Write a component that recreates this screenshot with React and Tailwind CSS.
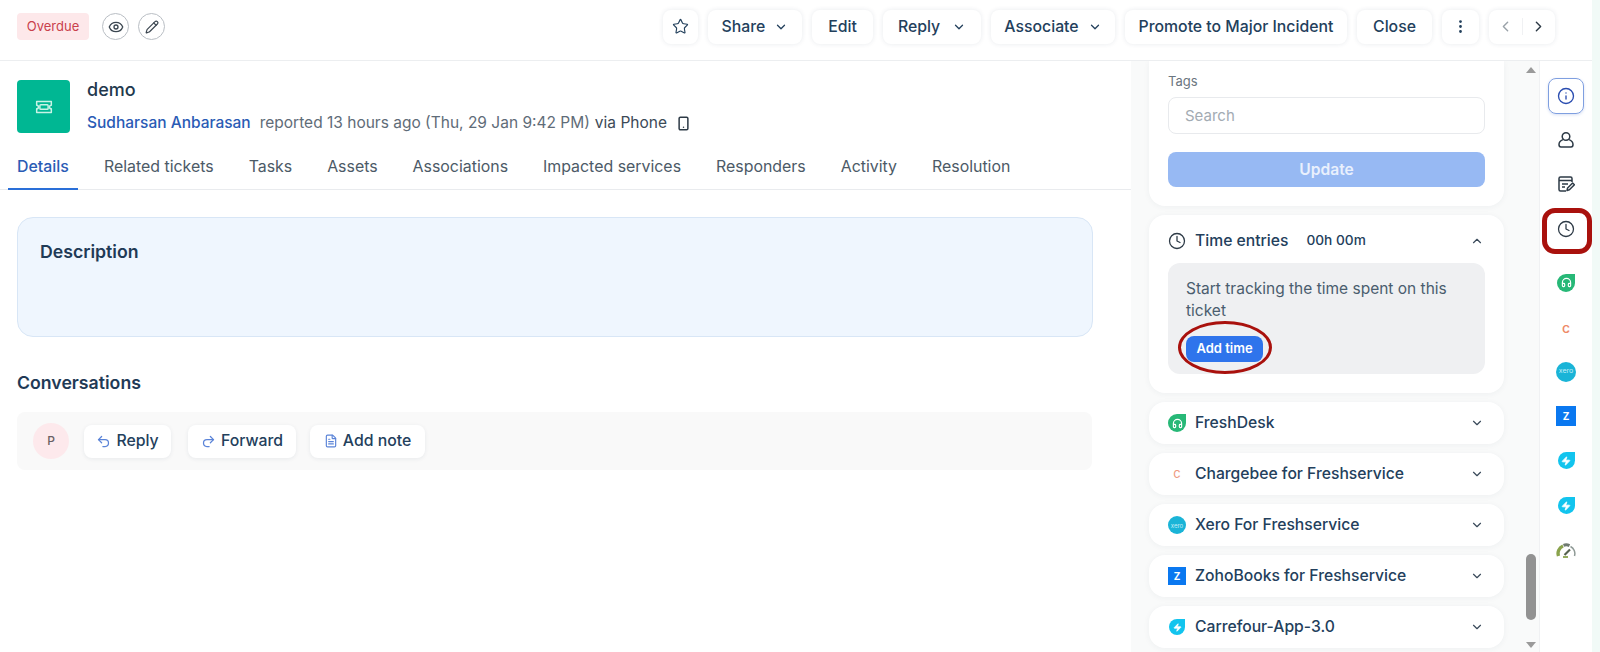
import React from "react";
import {
  Eye,
  Pencil,
  Star,
  ChevronDown,
  ChevronUp,
  ChevronLeft,
  ChevronRight,
  EllipsisVertical,
  Smartphone,
  Clock,
  Info,
  Undo2,
  Redo2,
  FileText,
  Headphones,
  Zap,
} from "lucide-react";

const tabs = ["Related tickets", "Tasks", "Assets", "Associations", "Impacted services", "Responders", "Activity", "Resolution"];

function ToolButton({ width, gap = "gap-[9px]", children }) {
  return (
    <button className={`h-[34px] flex items-center justify-center bg-white rounded-lg shadow-[0_0_5px_rgba(30,50,80,0.10)] text-[15.8px] font-medium text-[#23405c] ${gap} ${width}`}>
      {children}
    </button>
  );
}

function TicketIcon() {
  return (
    <svg width="22" height="22" viewBox="0 0 24 24" fill="none" stroke="#c9f3e6" strokeWidth="1.6" strokeLinejoin="round">
      <path d="M4 6h16v4a2 2 0 0 0 0 4v4H4v-4a2 2 0 0 0 0-4z" />
      <rect x="7.5" y="9.5" width="9" height="5" rx="1" />
    </svg>
  );
}

function FreshIcon({ color, size, icon }) {
  return (
    <span className={`flex items-center justify-center rounded-full rounded-tr-[3px] ${color} ${size}`}>{icon}</span>
  );
}

function XeroIcon({ size, text }) {
  return (
    <span className={`flex items-center justify-center rounded-full bg-[#1ab4d7] text-[#c5eef7] ${size} ${text}`}>xero</span>
  );
}

function ZohoIcon({ size }) {
  return <span className={`flex items-center justify-center bg-[#0a78f0] text-white text-[10px] font-bold ${size}`}>Z</span>;
}

function AppCard({ icon, name }) {
  return (
    <div className="h-[42px] shrink-0 flex items-center bg-white rounded-2xl shadow-[0_1px_6px_rgba(30,50,80,0.05)] pl-[19px] pr-[20px]">
      <span className="w-[18px] flex justify-center">{icon}</span>
      <span className="ml-[9px] text-[15.7px] font-medium text-[#23405c]">{name}</span>
      <ChevronDown size={14} strokeWidth={2} className="ml-auto text-[#3a4a5a]" />
    </div>
  );
}

function GaugeIcon() {
  return (
    <svg width="20" height="17" viewBox="0 0 20 17" fill="none">
      <path d="M2.500 14 A8 8 0 0 1 7 4" stroke="#8aa34c" strokeWidth="3.400" />
      <path d="M7.500 3.300 A8 8 0 0 1 13.500 3.600" stroke="#6f7a70" strokeWidth="3" />
      <path d="M14.500 4.500 A8 8 0 0 1 18.500 14" stroke="#8f9a96" strokeWidth="1.500" />
      <path d="M8.500 13 L14 7.500" stroke="#56624f" strokeWidth="2.200" />
      <path d="M7 15h5" stroke="#8aa34c" strokeWidth="1.800" />
    </svg>
  );
}

function PersonIcon() {
  return (
    <svg width="18" height="18" viewBox="0 0 18 18" fill="none" stroke="#2d3a46" strokeWidth="1.5">
      <circle cx="9" cy="5.500" r="3.800" />
      <path d="M6 8.600C3.500 9.500 2 11 2 13.500 2 15.500 3 16 4 16h10c1 0 2-.5 2-2.500 0-2.500-1.500-4-4-4.900" />
    </svg>
  );
}

function NotesIcon() {
  return (
    <svg width="18" height="18" viewBox="0 0 18 18" fill="none" stroke="#2d3a46" strokeWidth="1.5" strokeLinejoin="round">
      <path d="M15 7V3.500A1.500 1.500 0 0 0 13.500 2h-10A1.500 1.500 0 0 0 2 3.500v11A1.500 1.500 0 0 0 3.500 16H9" />
      <path d="M2 5.500h13M5 9h6M5 12h3" />
      <path d="M10 15.500l.6-2.500 5-5 1.800 1.800-5 5z" />
    </svg>
  );
}

export default function App() {
  return (
    <div className="w-[1600px] h-[652px] overflow-hidden bg-[#f1faf7] font-['Inter',sans-serif]">
      <div className="w-[1592px] h-full flex flex-col bg-white">
        {/* top toolbar */}
        <header className="h-[61px] shrink-0 flex items-center border-b border-[#eceef0] pl-[17px] pr-[37px] pb-[7px]">
          <span className="w-[72px] h-[27px] flex items-center justify-center rounded bg-[#fde8ea] text-[13px] text-[#c9404c]">Overdue</span>
          <span className="ml-[13px] w-[27px] h-[27px] flex items-center justify-center rounded-full border border-[#b9bec4] text-[#3b4650]">
            <Eye size={16} />
          </span>
          <span className="ml-[9px] w-[27px] h-[27px] flex items-center justify-center rounded-full border border-[#b9bec4] text-[#3b4650]">
            <Pencil size={14} />
          </span>
          <div className="ml-auto flex items-center gap-[10px]">
            <ToolButton width="w-[35px]"><Star size={17} strokeWidth={1.6} /></ToolButton>
            <ToolButton width="w-[94px]">Share<ChevronDown size={14} strokeWidth={2.2} /></ToolButton>
            <ToolButton width="w-[61px]">Edit</ToolButton>
            <ToolButton width="w-[98px]" gap="gap-[12px]">Reply<ChevronDown size={14} strokeWidth={2.2} /></ToolButton>
            <ToolButton width="w-[124px]">Associate<ChevronDown size={14} strokeWidth={2.2} /></ToolButton>
            <ToolButton width="w-[222px]">Promote to Major Incident</ToolButton>
            <ToolButton width="w-[75px]">Close</ToolButton>
            <ToolButton width="w-[37px]"><EllipsisVertical size={17} /></ToolButton>
            <div className="w-[66px] h-[34px] flex items-center bg-white rounded-lg shadow-[0_0_5px_rgba(30,50,80,0.10)]">
              <span className="flex-1 flex justify-center border-r border-[#f0f1f3] text-[#9aa2a9]"><ChevronLeft size={17} /></span>
              <span className="flex-1 flex justify-center text-[#2d3a46]"><ChevronRight size={17} /></span>
            </div>
          </div>
        </header>

        <div className="flex-1 flex min-h-0">
          {/* main column */}
          <main className="w-[1131px] shrink-0 flex flex-col">
            <div className="flex pl-[17px] pt-[19px]">
              <span className="w-[53px] h-[53px] flex items-center justify-center rounded bg-[#00b793]"><TicketIcon /></span>
              <div className="ml-[17px] -mt-[1px]">
                <h1 className="text-[18px] leading-[22px] font-medium text-[#22384d]">demo</h1>
                <div className="mt-[11px] flex items-center text-[15.5px] leading-[22px] text-[#5f6c78]">
                  <span className="font-medium text-[#2a5bb5]">Sudharsan Anbarasan</span>
                  <span className="ml-[9px]">reported 13 hours ago (Thu, 29 Jan 9:42 PM)</span>
                  <span className="ml-[5px] text-[#3c4a57]">via Phone</span>
                  <Smartphone size={15} strokeWidth={2.4} className="ml-[9px] text-[#2d3a46]" />
                </div>
              </div>
            </div>
            <nav className="mt-[11px] h-[45px] shrink-0 flex items-stretch gap-[17px] border-b border-[#e9ebee] pl-[8px]">
              <span className="h-[45px] flex items-center px-[9px] border-b-2 border-[#2a6fd8] text-[15.9px] font-medium text-[#2a5bb5]">Details</span>
              {tabs.map((t) => (
                <span key={t} className="flex items-center px-[9px] text-[15.9px] text-[#4c5a67]">{t}</span>
              ))}
            </nav>
            <section className="mt-[27px] ml-[17px] w-[1076px] h-[120px] rounded-2xl border border-[#d8e6f6] bg-[#eff6fe] pl-[22px] pt-[22px]">
              <h2 className="text-[17.7px] leading-[24px] font-semibold text-[#1f3a56]">Description</h2>
            </section>
            <h2 className="mt-[34px] ml-[17px] text-[17.7px] leading-[24px] font-semibold text-[#1f3a56]">Conversations</h2>
            <div className="mt-[17px] ml-[17px] w-[1075px] h-[58px] flex items-center rounded-lg bg-[#f9f9f9] pl-[16px]">
              <span className="w-[36px] h-[36px] flex items-center justify-center rounded-full bg-[#fde9ec] text-[12px] font-medium text-[#6a6064]">P</span>
              <button className="ml-[15px] w-[87px] h-[33px] flex items-center justify-center gap-[5px] rounded-lg bg-white shadow-[0_1px_4px_rgba(30,50,80,0.08)] text-[15.8px] font-medium text-[#23405c]">
                <Undo2 size={15} className="text-[#5b84d8]" />Reply
              </button>
              <button className="ml-[17px] w-[108px] h-[33px] flex items-center justify-center gap-[5px] rounded-lg bg-white shadow-[0_1px_4px_rgba(30,50,80,0.08)] text-[15.8px] font-medium text-[#23405c]">
                <Redo2 size={15} className="text-[#5b84d8]" />Forward
              </button>
              <button className="ml-[14px] w-[115px] h-[33px] flex items-center justify-center gap-[5px] rounded-lg bg-white shadow-[0_1px_4px_rgba(30,50,80,0.08)] text-[15.8px] font-medium text-[#23405c]">
                <FileText size={14} className="text-[#5b84d8]" />Add note
              </button>
            </div>
          </main>

          {/* properties panel */}
          <aside className="relative w-[408px] shrink-0 bg-[#f9fafa] overflow-hidden pl-[18px]">
            <div className="w-[355px] flex flex-col gap-[9px]">
              <div className="h-[145px] shrink-0 bg-white rounded-b-2xl shadow-[0_1px_6px_rgba(30,50,80,0.05)] px-[19px] pt-[10px]">
                <label className="block text-[13px] leading-[20px] text-[#6b7680]">Tags</label>
                <div className="mt-[6px] h-[37px] flex items-center rounded-lg border border-[#e8eaed] pl-[16px] pt-[1px] text-[15px] text-[#a3abb3]">Search</div>
                <button className="mt-[18px] w-full h-[35px] rounded-lg bg-[#97b9f3] text-[15.6px] font-semibold text-[#e9f0fd]">Update</button>
              </div>
              <div className="h-[178px] shrink-0 bg-white rounded-2xl shadow-[0_1px_6px_rgba(30,50,80,0.05)] px-[19px]">
                <div className="h-[48px] flex items-center pt-[3px]">
                  <Clock size={18} strokeWidth={1.7} className="text-[#2d3a46]" />
                  <span className="ml-[9px] text-[15.7px] font-medium text-[#23405c]">Time entries</span>
                  <span className="ml-[18px] text-[13.7px] font-medium text-[#23405c]">00h 00m</span>
                  <ChevronUp size={14} strokeWidth={2} className="ml-auto mr-[1px] text-[#3a4a5a]" />
                </div>
                <div className="h-[111px] rounded-xl bg-[#eff0f2] pl-[18px] pr-[14px] pt-[15px]">
                  <p className="text-[15.5px] leading-[22px] text-[#4a5d6e]">Start tracking the time spent on this ticket</p>
                  <button className="mt-[14px] w-[77px] h-[26px] rounded-lg bg-[#2f74ec] text-[13px] font-semibold text-white">Add time</button>
                </div>
              </div>
              <AppCard name="FreshDesk" icon={<FreshIcon color="bg-[#27b877]" size="w-[18px] h-[18px]" icon={<Headphones size={11} color="white" strokeWidth={2.5} />} />} />
              <AppCard name="Chargebee for Freshservice" icon={<span className="text-[13px] text-[#ee9a80]">c</span>} />
              <AppCard name="Xero For Freshservice" icon={<XeroIcon size="w-[18px] h-[18px]" text="text-[6px]" />} />
              <AppCard name="ZohoBooks for Freshservice" icon={<ZohoIcon size="w-[18px] h-[18px]" />} />
              <AppCard name="Carrefour-App-3.0" icon={<FreshIcon color="bg-[#12c4ee]" size="w-[16px] h-[16px]" icon={<Zap size={9} color="white" fill="white" />} />} />
            </div>
            {/* scrollbar */}
            <div className="absolute top-0 right-0 h-full w-[19px] flex flex-col items-center pl-[2px]">
              <span className="mt-[6px] w-0 h-0 border-x-[5px] border-x-transparent border-b-[6px] border-b-[#9a9a9a]" />
              <span className="mt-[481px] w-[10px] h-[66px] rounded-full bg-[#929292]" />
              <span className="mt-[22px] w-0 h-0 border-x-[5px] border-x-transparent border-t-[6px] border-t-[#9a9a9a]" />
            </div>
            {/* red annotation around Add time */}
            <span className="absolute left-[47px] top-[260px] w-[94px] h-[53px] rounded-[50%] border-[3px] border-[#a9110d]" />
          </aside>

          {/* icon rail */}
          <div className="relative w-[53px] shrink-0 border-l border-[#f0f1f3] flex flex-col items-center pt-[13px]">
            <div className="h-[44px] flex items-center">
              <span className="w-[36px] h-[36px] flex items-center justify-center rounded-lg border border-[#7f9fe0] shadow-[0_1px_3px_rgba(60,100,200,0.2)]">
                <Info size={18} strokeWidth={1.8} className="text-[#2a4db0]" />
              </span>
            </div>
            <div className="h-[44px] flex items-center"><PersonIcon /></div>
            <div className="h-[44px] flex items-center"><NotesIcon /></div>
            <div className="h-[44px] flex items-center pt-[2px]"><Clock size={18} strokeWidth={1.7} className="text-[#2d3a46]" /></div>
            <div className="mt-[10px] h-[45px] flex items-center"><FreshIcon color="bg-[#27b877]" size="w-[18px] h-[18px]" icon={<Headphones size={11} color="white" strokeWidth={2.5} />} /></div>
            <div className="h-[44px] flex items-center text-[14px] font-medium text-[#ee8a68]">c</div>
            <div className="h-[45px] flex items-center"><XeroIcon size="w-[20px] h-[20px]" text="text-[7px]" /></div>
            <div className="h-[44px] flex items-center"><ZohoIcon size="w-[20px] h-[20px]" /></div>
            <div className="h-[45px] flex items-center"><FreshIcon color="bg-[#12c4ee]" size="w-[17px] h-[17px]" icon={<Zap size={10} color="white" fill="white" />} /></div>
            <div className="h-[45px] flex items-center"><FreshIcon color="bg-[#12c4ee]" size="w-[17px] h-[17px]" icon={<Zap size={10} color="white" fill="white" />} /></div>
            <div className="h-[45px] flex items-center"><GaugeIcon /></div>
            {/* red annotation around the clock */}
            <span className="absolute left-[2px] top-[147px] w-[50px] h-[46px] rounded-[13px] border-[5px] border-[#a9110d]" />
          </div>
        </div>
      </div>
    </div>
  );
}
